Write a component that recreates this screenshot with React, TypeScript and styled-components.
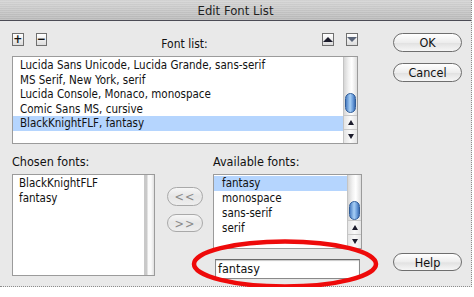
import styled, { createGlobalStyle } from "styled-components";

const Global = createGlobalStyle`
  html, body { margin: 0; padding: 0; background: #fff; }
  body { font-family: "DejaVu Sans Condensed", "DejaVu Sans", sans-serif; color: #111; }
`;

const Window = styled.div`
  position: relative;
  width: 472px;
  height: 287px;
  background: #e9e9e9;
  border-right: 1px dotted #8c8c8c;
  border-bottom: 1px dotted #8c8c8c;
  display: flex;
  flex-direction: column;
  box-sizing: border-box;
`;

const TitleBar = styled.div`
  height: 20px;
  line-height: 21px;
  text-align: center;
  font-size: 13px;
  color: #1e1e1e;
  background:
    repeating-linear-gradient(0deg, rgba(255, 255, 255, 0.18) 0 1px, transparent 1px 2px),
    linear-gradient(#d2d2d2, #b6b6b6);
  border-bottom: 1px solid #4b4b55;
`;

const Body = styled.div`
  display: grid;
  grid-template-columns: 350px 69px;
  column-gap: 31px;
  padding: 12px 0 0 12px;
`;

const MainCol = styled.div`
  display: flex;
  flex-direction: column;
`;

const Header = styled.div`
  width: 346px;
  height: 18px;
  display: grid;
  grid-template-columns: 35px 1fr 36px;
  align-items: start;
`;

const ToolGroup = styled.div`
  display: flex;
  gap: 12px;
`;

const SquareButton = styled.div<{ $w?: number }>`
  width: ${(p) => p.$w ?? 11}px;
  height: 11px;
  border: 1px solid #6f6f6f;
  background: linear-gradient(#ffffff, #dcdcdc);
  display: flex;
  align-items: center;
  justify-content: center;
  font-size: 12px;
  font-weight: bold;
  line-height: 11px;
  color: #111;
`;

const Triangle = styled.div<{ $down?: boolean; $dim?: boolean }>`
  width: 0;
  height: 0;
  border-left: 5px solid transparent;
  border-right: 5px solid transparent;
  ${(p) =>
    p.$down
      ? `border-top: 5px solid ${p.$dim ? "#5a6478" : "#1c1c2c"};`
      : `border-bottom: 5px solid ${p.$dim ? "#5a6478" : "#1c1c2c"};`}
`;

const SmallTriangle = styled(Triangle)`
  border-left-width: 3px;
  border-right-width: 3px;
  ${(p) => (p.$down ? "border-top-width: 5px;" : "border-bottom-width: 5px;")}
`;

const HeaderLabel = styled.div`
  text-align: center;
  font-size: 12px;
  line-height: 14px;
  padding-top: 4px;
`;

const ListBox = styled.div<{ $w?: number; $h: number }>`
  width: ${(p) => (p.$w ? `${p.$w}px` : "auto")};
  height: ${(p) => p.$h}px;
  border: 1px solid #9b9b9b;
  background: #fff;
  display: flex;
  box-sizing: border-box;
`;

const Rows = styled.div`
  flex: 1;
  padding-top: 1px;
`;

const Row = styled.div<{ $selected?: boolean; $indent?: number; $h?: number }>`
  height: ${(p) => p.$h ?? 14.6}px;
  line-height: ${(p) => p.$h ?? 14.6}px;
  padding-left: ${(p) => p.$indent ?? 7}px;
  font-size: 11.5px;
  white-space: nowrap;
  background: ${(p) => (p.$selected ? "#b5d5fe" : "transparent")};
`;

const Scroll = styled.div`
  width: 13px;
  display: flex;
  flex-direction: column;
  border-left: 1px solid #c4c4c4;
`;

const Track = styled.div`
  flex: 1;
  background: linear-gradient(90deg, #d6d6d6, #f2f2f2 35%, #ffffff 60%, #dedede);
`;

const Thumb = styled.div`
  width: 11px;
  margin-left: 1px;
  box-sizing: border-box;
  border: 1px solid #2f5d99;
  border-radius: 6px;
  background: linear-gradient(90deg, #4c7fc4, #a8d0f6 45%, #6d9fdc 75%, #3c6cb0);
`;

const ArrowCell = styled.div`
  height: 13px;
  display: flex;
  align-items: center;
  justify-content: center;
  border-top: 1px solid #c8c8c8;
  background: linear-gradient(90deg, #e4e4e4, #fafafa 50%, #e6e6e6);
`;

const EmptyTrack = styled.div`
  width: 10px;
  background: linear-gradient(90deg, #c9c9c9, #c9c9c9 3px, #fafafa 4px, #fafafa 7px, #e0e0e0);
`;

const SectionLabel = styled.div`
  font-size: 12.5px;
  line-height: 15px;
  margin-top: 10px;
  margin-bottom: 5px;
  white-space: nowrap;
`;

const Lower = styled.div`
  display: grid;
  grid-template-columns: 143px 38px 149px;
  column-gap: 10px;
`;

const Column = styled.div`
  display: flex;
  flex-direction: column;
`;

const MoveColumn = styled.div`
  display: flex;
  flex-direction: column;
  gap: 8px;
  padding-top: 43px;
  margin-left: 2px;
`;

const Pill = styled.div<{ $dim?: boolean; $h?: number }>`
  height: ${(p) => p.$h ?? 19}px;
  box-sizing: border-box;
  border: 1px solid ${(p) => (p.$dim ? "#a9a9a9" : "#6e6e6e")};
  border-radius: 10px;
  background: ${(p) =>
    p.$dim
      ? "linear-gradient(#f6f6f6, #e6e6e6 50%, #eeeeee)"
      : "linear-gradient(#ffffff, #ededed 50%, #e2e2e2 55%, #f6f6f6)"};
  color: ${(p) => (p.$dim ? "#8a8a8a" : "#111")};
  font-size: 12.5px;
  display: flex;
  align-items: center;
  justify-content: center;
  letter-spacing: ${(p) => (p.$dim ? "1px" : "0")};
`;

const ButtonCol = styled.div`
  display: flex;
  flex-direction: column;
`;

const Spacer = styled.div`
  flex: 1;
`;

const TextField = styled.div`
  margin-top: 10px;
  margin-left: 2px;
  width: 145px;
  height: 20px;
  box-sizing: border-box;
  border: 1px solid #8a8a8a;
  border-top-color: #6a6a6a;
  box-shadow: inset 0 1px 1px #c8c8c8;
  background: #fff;
  font-size: 12.5px;
  line-height: 18px;
  padding-left: 2px;
`;

const Annotation = styled.svg`
  position: absolute;
  left: 190px;
  top: 238px;
  pointer-events: none;
`;

function ScrollBar({ top, size }: { top: number; size: number }) {
  return (
    <Scroll>
      <Track>
        <Thumb style={{ marginTop: top, height: size }} />
      </Track>
      <ArrowCell>
        <SmallTriangle />
      </ArrowCell>
      <ArrowCell>
        <SmallTriangle $down />
      </ArrowCell>
    </Scroll>
  );
}

const fontList = [
  "Lucida Sans Unicode, Lucida Grande, sans-serif",
  "MS Serif, New York, serif",
  "Lucida Console, Monaco, monospace",
  "Comic Sans MS, cursive",
  "BlackKnightFLF, fantasy",
];

const available = ["fantasy", "monospace", "sans-serif", "serif"];

export default function App() {
  return (
    <>
      <Global />
      <Window>
        <TitleBar>Edit Font List</TitleBar>
        <Body>
          <MainCol>
            <Header>
              <ToolGroup>
                <SquareButton>+</SquareButton>
                <SquareButton>−</SquareButton>
              </ToolGroup>
              <HeaderLabel>Font list:</HeaderLabel>
              <ToolGroup>
                <SquareButton $w={12}>
                  <Triangle />
                </SquareButton>
                <SquareButton $w={12}>
                  <Triangle $down $dim />
                </SquareButton>
              </ToolGroup>
            </Header>
            <ListBox $w={346} $h={88} style={{ marginTop: 5 }}>
              <Rows>
                {fontList.map((f, i) => (
                  <Row key={f} $selected={i === fontList.length - 1}>
                    {f}
                  </Row>
                ))}
              </Rows>
              <ScrollBar top={36} size={20} />
            </ListBox>
            <Lower>
              <Column>
                <SectionLabel>Chosen fonts:</SectionLabel>
                <ListBox $h={102}>
                  <Rows>
                    <Row $indent={6} $h={15}>BlackKnightFLF</Row>
                    <Row $indent={6} $h={15}>fantasy</Row>
                  </Rows>
                  <EmptyTrack />
                </ListBox>
              </Column>
              <MoveColumn>
                <Pill $dim>&lt;&lt;</Pill>
                <Pill $dim $h={18}>&gt;&gt;</Pill>
              </MoveColumn>
              <Column>
                <SectionLabel>Available fonts:</SectionLabel>
                <ListBox $h={75}>
                  <Rows>
                    {available.map((f, i) => (
                      <Row key={f} $selected={i === 0} $indent={8} $h={15}>
                        {f}
                      </Row>
                    ))}
                  </Rows>
                  <ScrollBar top={26} size={19} />
                </ListBox>
                <TextField>fantasy</TextField>
              </Column>
            </Lower>
          </MainCol>
          <ButtonCol>
            <Pill>OK</Pill>
            <Pill style={{ marginTop: 11 }}>Cancel</Pill>
            <Spacer />
            <Pill $h={18} style={{ marginBottom: 8 }}>Help</Pill>
          </ButtonCol>
        </Body>
        <Annotation width="190" height="52" viewBox="0 0 190 52">
          <ellipse cx="95" cy="26" rx="91" ry="22.5" fill="none" stroke="#ee0a0a" strokeWidth="4.5" />
        </Annotation>
      </Window>
    </>
  );
}
